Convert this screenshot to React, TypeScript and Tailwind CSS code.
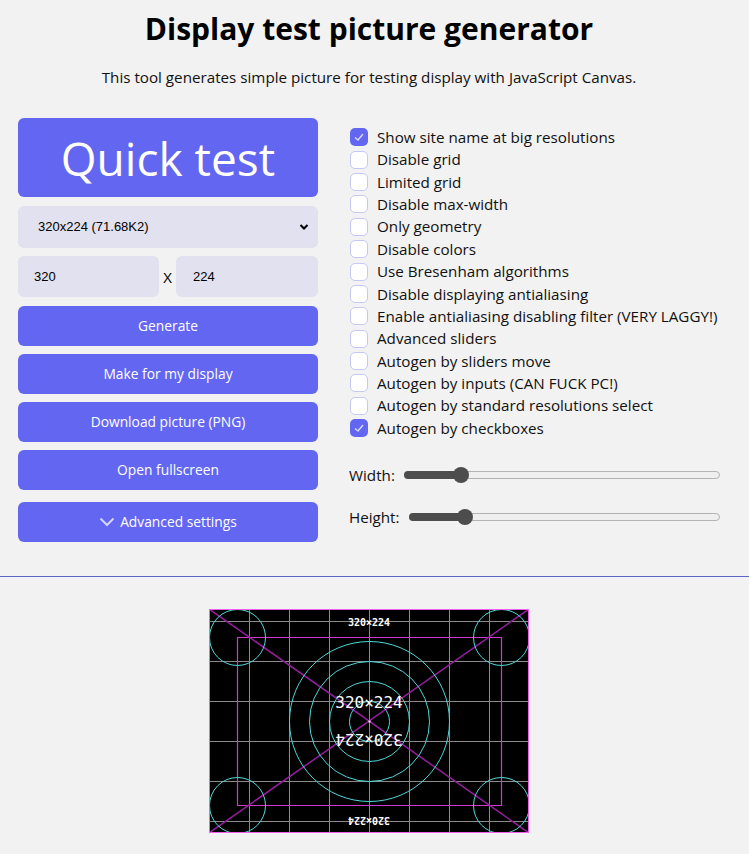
const sans = "font-['Open_Sans',sans-serif]";

const options = [
    { label: "Show site name at big resolutions", checked: true },
    { label: "Disable grid", checked: false },
    { label: "Limited grid", checked: false },
    { label: "Disable max-width", checked: false },
    { label: "Only geometry", checked: false },
    { label: "Disable colors", checked: false },
    { label: "Use Bresenham algorithms", checked: false },
    { label: "Disable displaying antialiasing", checked: false },
    { label: "Enable antialiasing disabling filter (VERY LAGGY!)", checked: false },
    { label: "Advanced sliders", checked: false },
    { label: "Autogen by sliders move", checked: false },
    { label: "Autogen by inputs (CAN FUCK PC!)", checked: false },
    { label: "Autogen by standard resolutions select", checked: false },
    { label: "Autogen by checkboxes", checked: true },
];

const Checkbox = ({ checked }: { checked: boolean }) => (
    <span
        className={
            checked
                ? "w-[18px] h-[18px] ml-[1px] mr-[9px] shrink-0 rounded-[5px] bg-[#6366f1] flex items-center justify-center"
                : "w-[18px] h-[18px] ml-[1px] mr-[9px] shrink-0 rounded-[5px] border border-[#c5c8f3] bg-white"
        }
    >
        {checked && (
            <svg width="12" height="12" viewBox="0 0 12 12">
                <polyline points="2,6.5 5,9 10,3" fill="none" stroke="#d8d9fb" strokeWidth="1.4" />
            </svg>
        )}
    </span>
);

// slider fake, el valor va como fraccion
const Slider = ({ label, value }: { label: string; value: number }) => (
    <div className="flex items-center h-[24px]">
        <span className="text-[15.2px] text-[#111] mr-[9px]">{label}</span>
        <div className="relative flex-1 h-[16px] flex items-center">
            <div className="w-full h-[8px] rounded-full border border-[#b3b3b3] bg-[#efefef]" />
            <div
                className="absolute left-0 h-[8px] rounded-full bg-[#4d4d4d]"
                style={{ width: `calc(${value * 100}% + 8px)` }}
            />
            <div
                className="absolute w-[16px] h-[16px] rounded-full bg-[#4d4d4d]"
                style={{ left: `calc(${value * 100}% - ${value * 16}px)` }}
            />
        </div>
    </div>
);

const TestPicture = () => {
    const vLines = [40, 80, 120, 160, 200, 240, 280];
    const hLines = [12, 52, 92, 132, 172, 212];
    return (
        <svg width="320" height="224" viewBox="0 0 320 224" className="block">
            <rect x="0" y="0" width="320" height="224" fill="#000" />
            {vLines.map((x) => (
                <line key={`v${x}`} x1={x + 0.5} y1="0" x2={x + 0.5} y2="224" stroke="#8a8a8a" strokeWidth="1" />
            ))}
            {hLines.map((y) => (
                <line key={`h${y}`} x1="0" y1={y + 0.5} x2="320" y2={y + 0.5} stroke="#8a8a8a" strokeWidth="1" />
            ))}
            {/* marco interior */}
            <line x1="28" y1="28.5" x2="293" y2="28.5" stroke="#d038d0" strokeWidth="1.2" />
            <line x1="28" y1="196.5" x2="293" y2="196.5" stroke="#d038d0" strokeWidth="1.2" />
            <line x1="28.5" y1="28" x2="28.5" y2="197" stroke="#d038d0" strokeWidth="1.2" />
            <line x1="292.5" y1="28" x2="292.5" y2="197" stroke="#d038d0" strokeWidth="1.2" />
            <line x1="0" y1="0" x2="320" y2="224" stroke="#961e9e" strokeWidth="1.5" />
            <line x1="320" y1="0" x2="0" y2="224" stroke="#961e9e" strokeWidth="1.5" />
            {[20, 40, 60, 80].map((r) => (
                <circle key={r} cx="160.5" cy="112.5" r={r} fill="none" stroke="#4fd8d8" strokeWidth="1" />
            ))}
            {[
                [28, 28],
                [292, 28],
                [28, 196],
                [292, 196],
            ].map(([cx, cy]) => (
                <circle key={`${cx}-${cy}`} cx={cx + 0.5} cy={cy + 0.5} r="28" fill="none" stroke="#4fd8d8" strokeWidth="1" />
            ))}
            <rect x="159.5" y="111.5" width="2" height="2" fill="#fff" />
            <g fill="#fff" fontFamily="'DejaVu Sans Mono', monospace" textAnchor="middle">
                <text x="160" y="16.5" fontSize="10" fontWeight="bold">320×224</text>
                <text x="160" y="99" fontSize="16">320×224</text>
                <text x="160" y="137" fontSize="16" transform="rotate(180 160 131)">320×224</text>
                <text x="160" y="214.5" fontSize="10" fontWeight="bold" transform="rotate(180 160 211)">320×224</text>
            </g>
            <rect x="0.5" y="0.5" width="319" height="223" fill="none" stroke="#f060f0" strokeWidth="1" />
        </svg>
    );
};

const btn = "h-[40px] rounded-md bg-[#6366f1] text-white text-[13.8px]";

const App = () => {
    return (
        <div className={`min-h-[854px] w-full bg-[#f2f2f2] text-black ${sans}`}>
            <div className="w-[738px]">
                <h1 className="pt-[10px] text-center text-[30px] leading-[38px] font-bold">
                    Display test picture generator
                </h1>
                <p className="mt-[17px] text-center text-[15.2px] leading-[24px] text-[#111]">
                    This tool generates simple picture for testing display with JavaScript Canvas.
                </p>

                <div className="flex mt-[29px] px-[18px]">
                    {/* columna izquierda */}
                    <div className="w-[300px] shrink-0 flex flex-col">
                        <button className="h-[79px] rounded-md bg-[#6366f1] text-white text-[46px] leading-none">
                            Quick test
                        </button>
                        <div className="mt-[8.5px] h-[42px] rounded-md bg-[#e1e1ef] flex items-center justify-between pl-[20px] pr-[9px] font-['Liberation_Sans',sans-serif] text-[13px]">
                            <span>320x224 (71.68K2)</span>
                            <svg width="10" height="8" viewBox="0 0 10 8">
                                <polyline points="1.5,2 5,5.5 8.5,2" fill="none" stroke="#000" strokeWidth="2" />
                            </svg>
                        </div>
                        <div className="mt-[8.5px] h-[41px] flex items-center">
                            <div className="w-[141px] h-full rounded-md bg-[#e1e1ef] flex items-center pl-[16px] font-['Liberation_Sans',sans-serif] text-[13px]">
                                320
                            </div>
                            <span className="flex-1 text-center text-[15px] pt-[2px]">X</span>
                            <div className="w-[142px] h-full rounded-md bg-[#e1e1ef] flex items-center pl-[17px] font-['Liberation_Sans',sans-serif] text-[13px]">
                                224
                            </div>
                        </div>
                        <button className={`mt-[9px] ${btn}`}>Generate</button>
                        <button className={`mt-[8px] ${btn}`}>Make for my display</button>
                        <button className={`mt-[8px] ${btn}`}>Download picture (PNG)</button>
                        <button className={`mt-[8px] ${btn}`}>Open fullscreen</button>
                        <button className={`mt-[12px] ${btn} flex items-center justify-center gap-[5px]`}>
                            <svg width="16" height="10" viewBox="0 0 16 10">
                                <polyline points="1.5,1.5 8,8 14.5,1.5" fill="none" stroke="#d4d5fb" strokeWidth="2" />
                            </svg>
                            Advanced settings
                        </button>
                    </div>

                    {/* columna derecha */}
                    <div className="flex-1 ml-[31px] pt-[8px]">
                        {options.map((o) => (
                            <div key={o.label} className="flex items-center h-[22.4px] text-[15.2px] text-[#111]">
                                <Checkbox checked={o.checked} />
                                <span>{o.label}</span>
                            </div>
                        ))}
                        <div className="mt-[24px]">
                            <Slider label="Width:" value={0.165} />
                        </div>
                        <div className="mt-[18px]">
                            <Slider label="Height:" value={0.165} />
                        </div>
                    </div>
                </div>
            </div>

            <div className="mt-[34px] h-px w-full bg-[#5c64c8]" />

            <div className="w-[738px] flex justify-center pt-[32px]">
                <TestPicture />
            </div>
        </div>
    );
};

export default App;
